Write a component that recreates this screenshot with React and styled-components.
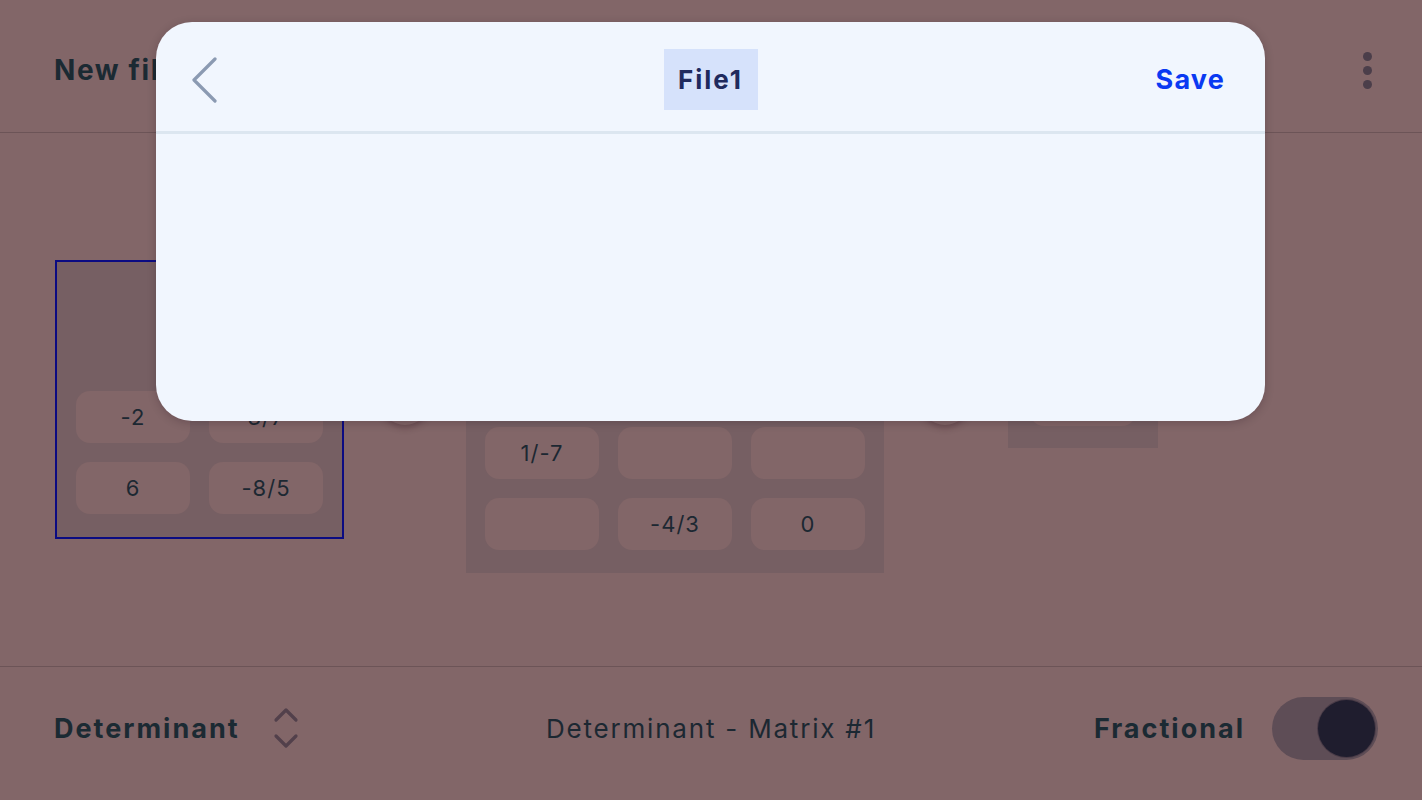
import React from "react";
import styled, { createGlobalStyle } from "styled-components";

const Global = createGlobalStyle`
  html, body { margin: 0; padding: 0; }
  body {
    background: #826668;
    font-family: "Inter", "Noto Sans", sans-serif;
    color: #1c2832;
    overflow: hidden;
  }
  #root { height: 800px; }
`;

const Page = styled.div`
  width: 1422px;
  height: 800px;
  display: flex;
  flex-direction: column;
  background: #826668;
  position: relative;
`;

const TopBar = styled.header`
  height: 133px;
  box-sizing: border-box;
  border-bottom: 1px solid #6c5457;
  display: flex;
  align-items: center;
  justify-content: space-between;
  padding: 8px 44px 0 54px;
`;

const Title = styled.h1`
  margin: 0;
  font-size: 28px;
  font-weight: 700;
  letter-spacing: 1.6px;
  color: #1b2a33;
`;

const Kebab = styled.div`
  display: flex;
  flex-direction: column;
  gap: 5px;
  padding: 4px 6px;
  span {
    width: 9px;
    height: 9px;
    border-radius: 50%;
    background: #4b3e4a;
  }
`;

const Workspace = styled.main`
  flex: 1;
  display: flex;
  align-items: center;
  gap: 36px;
  padding-left: 55px;
`;

const MatrixBox = styled.div`
  background: #765f63;
  padding: ${(p) => p.$pad}px ${(p) => p.$pad}px ${(p) => p.$padB}px;
  border: ${(p) => (p.$active ? "2px solid #0b0b82" : "none")};
  display: flex;
  flex-direction: column;
  gap: 19px;
  margin-left: ${(p) => p.$shift || 0}px;
`;

const MatrixHead = styled.div`
  height: ${(p) => p.$h}px;
`;

const Grid = styled.div`
  display: grid;
  grid-template-columns: repeat(${(p) => p.$cols}, ${(p) => p.$cw}px);
  gap: 19px;
`;

const Cell = styled.div`
  height: 52px;
  border-radius: 14px;
  background: #826668;
  display: flex;
  align-items: center;
  justify-content: center;
  font-size: 22px;
  letter-spacing: 1px;
  color: #1c2832;
`;

const OpCircle = styled.div`
  width: 50px;
  height: 50px;
  border-radius: 50%;
  background: #806466;
  box-shadow: 0 3px 6px rgba(60, 30, 40, 0.35);
`;

const BottomBar = styled.footer`
  height: 134px;
  box-sizing: border-box;
  border-top: 1px solid #6c5457;
  display: grid;
  grid-template-columns: 1fr auto 1fr;
  align-items: center;
  padding: 0 44px 11px 44px;
`;

const Picker = styled.div`
  display: flex;
  align-items: center;
  gap: 33px;
  padding-left: 10px;
`;

const Label = styled.span`
  font-size: 27px;
  font-weight: 700;
  letter-spacing: 2px;
  color: #1b2a33;
`;

const Caption = styled.span`
  font-size: 26px;
  font-weight: 400;
  letter-spacing: 1.8px;
  color: #1c2832;
`;

const ToggleGroup = styled.div`
  display: flex;
  align-items: center;
  justify-content: flex-end;
  gap: 27px;
`;

const Track = styled.div`
  width: 106px;
  height: 63px;
  border-radius: 32px;
  background: #5e4d56;
  display: flex;
  align-items: center;
  justify-content: flex-end;
  padding: 0 3px;
  box-sizing: border-box;
`;

const Knob = styled.div`
  width: 57px;
  height: 57px;
  border-radius: 50%;
  background: #1f1d2e;
  box-shadow: 0 0 0 1px #4a3c48;
`;

const Layer = styled.div`
  position: absolute;
  inset: 0;
`;

const Modal = styled.section`
  position: absolute;
  top: 22px;
  left: 156px;
  width: 1109px;
  height: 399px;
  border-radius: 36px;
  background: #f1f6fe;
  box-shadow: 0 2px 8px rgba(40, 20, 30, 0.25);
  display: flex;
  flex-direction: column;
  overflow: hidden;
`;

const ModalHead = styled.div`
  height: 109px;
  border-bottom: 3px solid #dce6f0;
  display: grid;
  grid-template-columns: 1fr auto 1fr;
  align-items: center;
  padding: 0 40px;
`;

const BackBtn = styled.div`
  display: flex;
  align-items: center;
  justify-self: start;
  padding-top: 6px;
  margin-left: -4px;
`;

const FileName = styled.div`
  background: #d6e2fb;
  width: 94px;
  height: 61px;
  margin-top: 5px;
  display: flex;
  align-items: center;
  justify-content: center;
  font-size: 26px;
  font-weight: 700;
  letter-spacing: 2px;
  color: #1f2a5e;
`;

const SaveBtn = styled.span`
  justify-self: end;
  font-size: 27px;
  font-weight: 700;
  letter-spacing: 1.2px;
  color: #0a39f2;
  padding-top: 6px;
`;

const ModalBody = styled.div`
  flex: 1;
`;

function Matrix({ cols, cw, values, head, pad, padB, active, shift }) {
  return (
    <MatrixBox $pad={pad} $padB={padB} $active={active} $shift={shift}>
      {head ? <MatrixHead $h={head} /> : null}
      <Grid $cols={cols} $cw={cw}>
        {values.map((v, i) => (
          <Cell key={i}>{v}</Cell>
        ))}
      </Grid>
    </MatrixBox>
  );
}

export default function App() {
  return (
    <>
      <Global />
      <Page>
        <TopBar>
          <Title>New file</Title>
          <Kebab>
            <span />
            <span />
            <span />
          </Kebab>
        </TopBar>
        <Workspace>
          <Matrix active pad={19} padB={23} cols={2} cw={114} head={91} values={["-2", "3/7", "6", "-8/5"]} />
          <OpCircle />
          <Matrix pad={19} padB={23} cols={3} cw={114} head={91} values={["", "", "", "1/-7", "", "", "", "-4/3", "0"]} />
          <OpCircle />
          <Matrix pad={22} padB={22} cols={1} cw={106} shift={2} values={[""]} />
        </Workspace>
        <BottomBar>
          <Picker>
            <Label>Determinant</Label>
            <svg width="26" height="42" viewBox="0 0 26 42" fill="none" stroke="#52404b" strokeWidth="3.2" strokeLinecap="round" strokeLinejoin="round">
              <polyline points="3,13 13,3 23,13" />
              <polyline points="3,29 13,39 23,29" />
            </svg>
          </Picker>
          <Caption>Determinant - Matrix #1</Caption>
          <ToggleGroup>
            <Label>Fractional</Label>
            <Track>
              <Knob />
            </Track>
          </ToggleGroup>
        </BottomBar>
        <Layer>
          <Modal>
            <ModalHead>
              <BackBtn>
                <svg width="26" height="46" viewBox="0 0 26 46" fill="none" stroke="#8b9ab2" strokeWidth="3.2" strokeLinecap="round" strokeLinejoin="round">
                  <polyline points="23,2 2,23 23,44" />
                </svg>
              </BackBtn>
              <FileName>File1</FileName>
              <SaveBtn>Save</SaveBtn>
            </ModalHead>
            <ModalBody />
          </Modal>
        </Layer>
      </Page>
    </>
  );
}
